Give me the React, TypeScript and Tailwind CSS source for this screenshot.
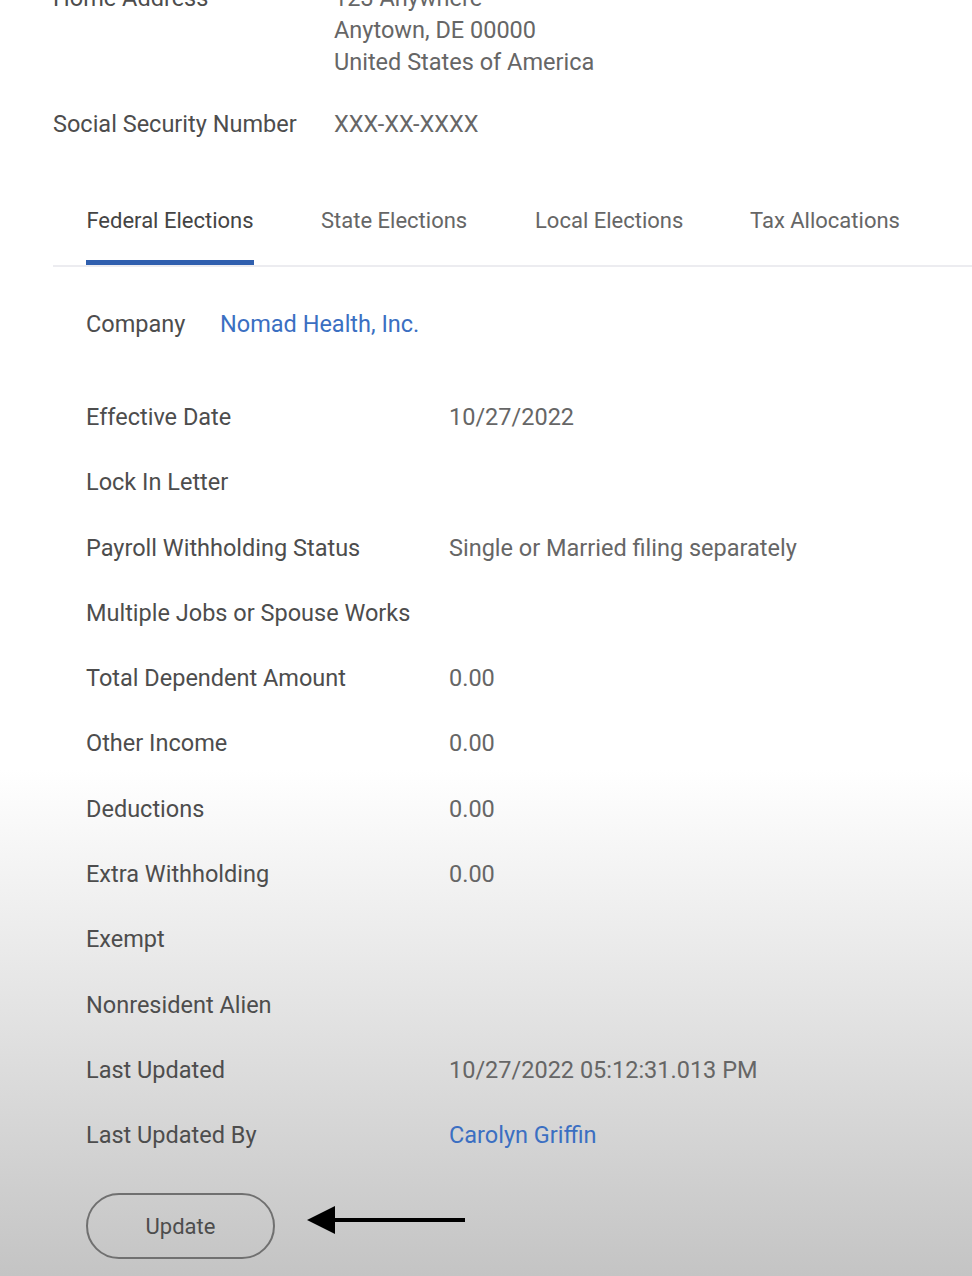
import React from "react";

const rows: { label: string; value?: string; link?: boolean }[] = [
  { label: "Effective Date", value: "10/27/2022" },
  { label: "Lock In Letter" },
  { label: "Payroll Withholding Status", value: "Single or Married filing separately" },
  { label: "Multiple Jobs or Spouse Works" },
  { label: "Total Dependent Amount", value: "0.00" },
  { label: "Other Income", value: "0.00" },
  { label: "Deductions", value: "0.00" },
  { label: "Extra Withholding", value: "0.00" },
  { label: "Exempt" },
  { label: "Nonresident Alien" },
  { label: "Last Updated", value: "10/27/2022 05:12:31.013 PM" },
  { label: "Last Updated By", value: "Carolyn Griffin", link: true },
];

export default function App() {
  return (
    <div
      className="w-[972px] h-[1276px] overflow-hidden bg-[linear-gradient(to_bottom,#ffffff_0px,#ffffff_770px,#c4c4c4_1276px)] text-[23.5px] text-[#555]"
      style={{ fontFamily: "Roboto, 'Noto Sans', sans-serif" }}
    >
      {/* Top personal info */}
      <div className="pl-[53px] mt-[-10px]">
        <div className="flex">
          <div className="w-[281px] text-[#4d4d4d] whitespace-nowrap leading-[32px] mt-[-8px]">Home Address</div>
          <div className="flex flex-col leading-[32px] text-[#666]">
            <span className="leading-[32px] mt-[-8px]">123 Anywhere</span>
            <span>Anytown, DE 00000</span>
            <span>United States of America</span>
          </div>
        </div>
        <div className="flex mt-[30px] leading-[32px]">
          <div className="w-[281px] text-[#4d4d4d] whitespace-nowrap">Social Security Number</div>
          <div className="text-[#666]">XXX-XX-XXXX</div>
        </div>
      </div>

      {/* Tabs */}
      <div className="ml-[53px] mt-[69px] border-b-2 border-[#ececf0]">
        <div className="flex pl-[33px] text-[22px] leading-[24px]">
          <div className="w-[168px] flex flex-col items-center">
            <span className="text-[#444] whitespace-nowrap">Federal Elections</span>
            <div className="mt-[27px] h-[5px] w-full bg-[#2f5fae]" />
          </div>
          <div className="ml-[67px] w-[214px] text-[#666] whitespace-nowrap">State Elections</div>
          <div className="w-[215px] text-[#666] whitespace-nowrap">Local Elections</div>
          <div className="text-[#666] whitespace-nowrap">Tax Allocations</div>
        </div>
      </div>

      {/* Company */}
      <div className="pl-[86px] mt-[41px] flex leading-[32px]">
        <span className="w-[134px] text-[#4d4d4d]">Company</span>
        <span className="text-[#3b6fc2]">Nomad Health, Inc.</span>
      </div>

      {/* Rows */}
      <div className="pl-[86px] mt-[61px] flex flex-col gap-[33.3px]">
        {rows.map((r) => (
          <div key={r.label} className="flex leading-[32px] h-[32px]">
            <span className="w-[363px] text-[#4d4d4d] whitespace-nowrap">{r.label}</span>
            {r.value && (
              <span className={r.link ? "text-[#3b6fc2] whitespace-nowrap" : "text-[#666] whitespace-nowrap"}>{r.value}</span>
            )}
          </div>
        ))}
      </div>

      {/* Button + arrow */}
      <div className="pl-[86px] mt-[42px] flex items-center">
        <button className="w-[189px] h-[66px] rounded-full border-2 border-[#707070] text-[#4d4d4d] text-[22px]">
          Update
        </button>
        <svg width="160" height="32" viewBox="0 0 160 32" className="ml-[32px] mt-[-12px]">
          <polygon points="0,16 28,2 28,30" fill="#000" />
          <rect x="24" y="14" width="134" height="4" fill="#000" />
        </svg>
      </div>
    </div>
  );
}
